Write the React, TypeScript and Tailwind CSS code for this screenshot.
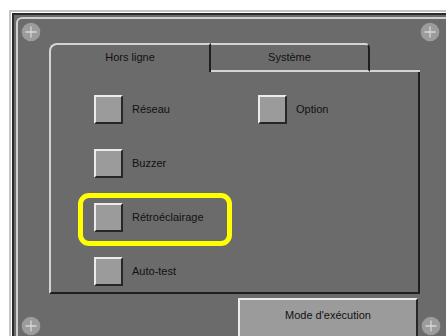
import React from 'react';

const font = { fontFamily: '"Liberation Sans", Arial, sans-serif' };

const Screw = ({ className }: { className: string }) => (
  <svg className={`absolute ${className}`} width="20" height="20" viewBox="0 0 20 20">
    <circle cx="10" cy="10" r="9.3" fill="#9c9c9c" />
    <path d="M10 4.5v11M4.5 10h11" stroke="#d6d6d6" strokeWidth="1.3" />
  </svg>
);

const OptionButton = ({ label }: { label: string }) => (
  <div className="flex items-center gap-[9px] h-[29px]">
    <div className="w-[29px] h-[29px] bg-[#9b9b9b] border-t-2 border-l-2 border-t-[#ebebeb] border-l-[#ebebeb] border-b-2 border-r-2 border-b-[#262626] border-r-[#262626]" />
    <span className="text-[11px] text-[#111]">{label}</span>
  </div>
);

export default function App() {
  return (
    <div className="relative w-[446px] h-[336px] overflow-hidden bg-white pl-[9px] pt-[10px]" style={font}>
      <div className="h-full border-l-2 border-t-2 border-[#c4c4c4]">
        <div className="h-full border-l border-t border-white">
          <div className="h-full border-l-2 border-t-2 border-[#2a2a2a] bg-[#6b6b6b] pl-[2px] pt-[2px]">
            <div className="h-full border-l-2 border-t-2 border-[#cfcfcf] rounded-tl-[6px] pl-[31px] pt-[24px]">
              {/* tabs */}
              <div className="flex w-[371px] h-[29px]">
                <div className="w-[162px] border-l-2 border-t-2 border-[#d4d4d4] border-r-2 border-r-[#1e1e1e] rounded-tl-[8px] flex items-center justify-center pb-[2px] text-[11px] text-[#111]">
                  Hors ligne
                </div>
                <div className="w-[159px] border-t-2 border-b-2 border-[#d4d4d4] border-r-2 border-r-[#1e1e1e] rounded-tr-[5px] flex items-center justify-center text-[11px] text-[#111]">
                  Système
                </div>
                <div className="flex-1 border-b-2 border-[#d4d4d4]" />
              </div>
              {/* content */}
              <div className="w-[371px] h-[222px] border-l-2 border-[#d4d4d4] border-r-2 border-r-[#1e1e1e] border-b-2 border-b-[#1e1e1e] pl-[43px] pt-[23px]">
                <div className="grid grid-cols-[164px_1fr] gap-y-[25px]">
                  <OptionButton label="Réseau" />
                  <OptionButton label="Option" />
                  <OptionButton label="Buzzer" />
                  <div />
                  <div className="relative">
                    <div className="absolute -left-[16px] -top-[10px] w-[154px] h-[53px] border-[5px] border-[#ffff00] rounded-[11px]" />
                    <OptionButton label="Rétroéclairage" />
                  </div>
                  <div />
                  <OptionButton label="Auto-test" />
                  <div />
                </div>
              </div>
              {/* mode button */}
              <div className="ml-[189px] mt-[4px] w-[180px] h-[44px] bg-[#9b9b9b] border-t-2 border-l-2 border-[#ebebeb] border-r-2 border-r-[#262626] pt-[7px] text-center text-[11px] text-[#111]">
                Mode d'exécution
              </div>
            </div>
          </div>
        </div>
      </div>
      <Screw className="left-[21px] top-[22px]" />
      <Screw className="left-[420px] top-[22px]" />
      <Screw className="left-[21px] top-[316px]" />
      <Screw className="left-[421px] top-[316px]" />
    </div>
  );
}
